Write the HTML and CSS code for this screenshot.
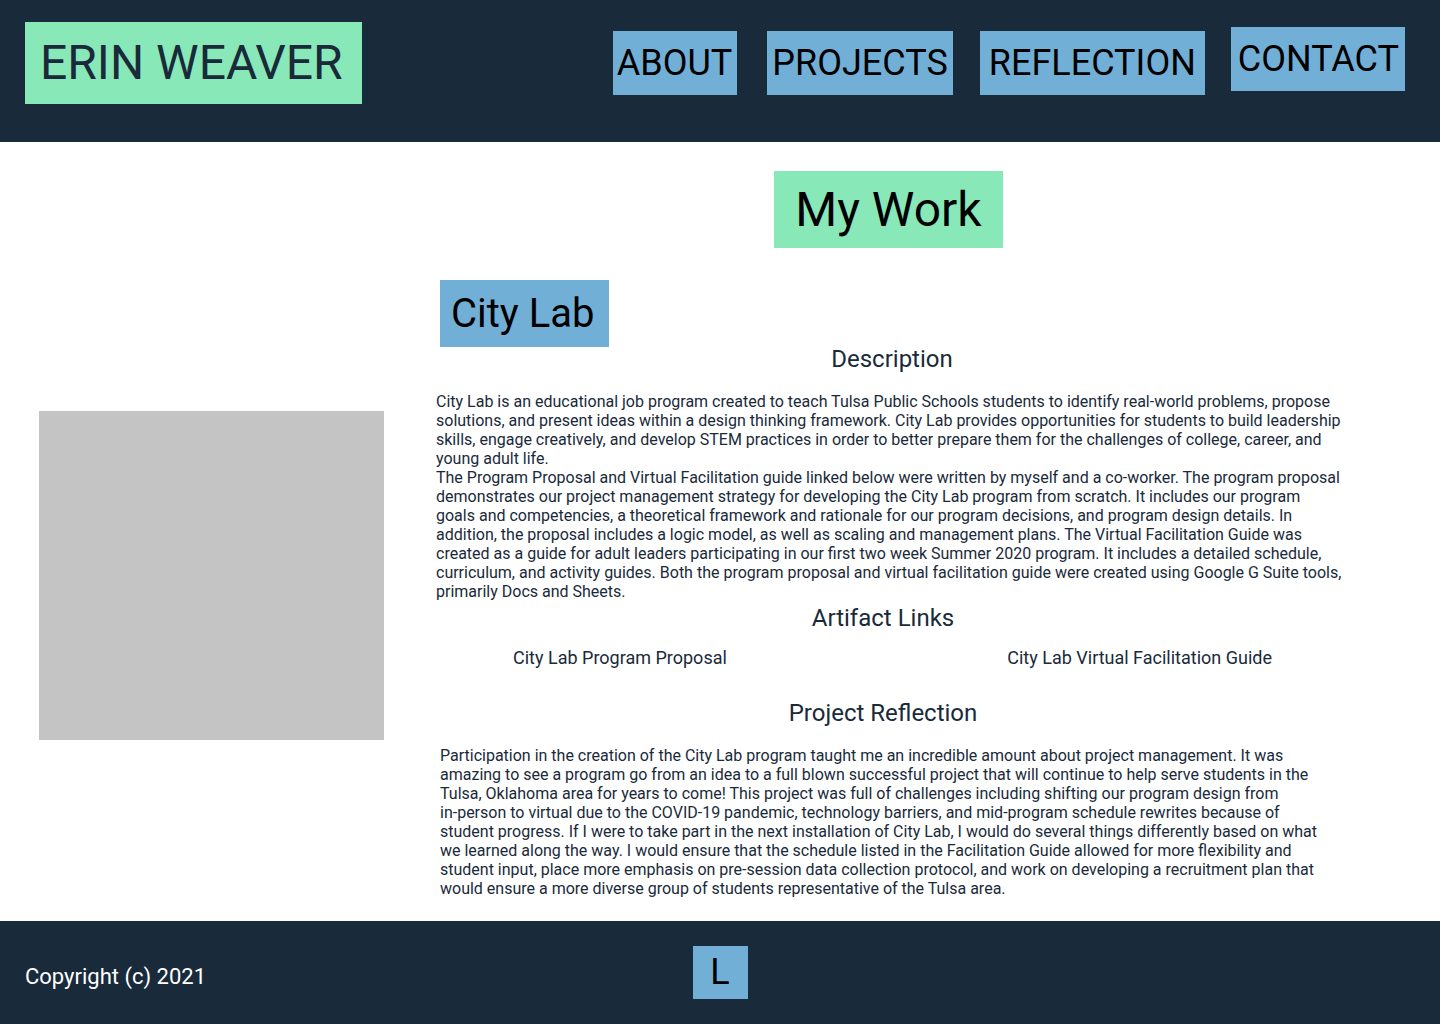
FILE: index.html
```html
<!DOCTYPE html>
<html lang="en">
<head>
<meta charset="utf-8">
<title>Erin Weaver - My Work</title>
<link rel="stylesheet" href="styles.css">
</head>
<body>
<header class="site-header">
  <div class="logo">ERIN WEAVER</div>
  <nav class="nav">
    <a class="nav-item nav-about" href="#">ABOUT</a>
    <a class="nav-item nav-projects" href="#">PROJECTS</a>
    <a class="nav-item nav-reflection" href="#">REFLECTION</a>
    <a class="nav-item nav-contact" href="#">CONTACT</a>
  </nav>
</header>
<main class="main">
  <aside class="aside">
    <div class="photo"></div>
  </aside>
  <section class="content">
    <h1 class="page-title">My Work</h1>
    <h2 class="project-title">City Lab</h2>
    <h3 class="section-title">Description</h3>
    <div class="text description">
      <p>City Lab is an educational job program created to teach Tulsa Public Schools students to identify real-world problems, propose solutions, and present ideas within a design thinking framework. City Lab provides opportunities for students to build leadership skills, engage creatively, and develop STEM practices in order to better prepare them for the challenges of college, career, and young adult life.</p>
      <p>The Program Proposal and Virtual Facilitation guide linked below were written by myself and a co-worker. The program proposal demonstrates our project management strategy for developing the City Lab program from scratch. It includes our program goals and competencies, a theoretical framework and rationale for our program decisions, and program design details. In addition, the proposal includes a logic model, as well as scaling and management plans. The Virtual Facilitation Guide was created as a guide for adult leaders participating in our first two week Summer 2020 program. It includes a detailed schedule, curriculum, and activity guides. Both the program proposal and virtual facilitation guide were created using Google G Suite tools, primarily Docs and Sheets.</p>
    </div>
    <h3 class="section-title links-title">Artifact Links</h3>
    <div class="links">
      <a class="link" href="#">City Lab Program Proposal</a>
      <a class="link" href="#">City Lab Virtual Facilitation Guide</a>
    </div>
    <h3 class="section-title reflection-title">Project Reflection</h3>
    <div class="text reflection">
      <p>Participation in the creation of the City Lab program taught me an incredible amount about project management. It was amazing to see a program go from an idea to a full blown successful project that will continue to help serve students in the Tulsa, Oklahoma area for years to come! This project was full of challenges including shifting our program design from <span class="nowrap">in-person</span> to virtual due to the COVID-19 pandemic, technology barriers, and mid-program schedule rewrites because of student progress. If I were to take part in the next installation of City Lab, I would do several things differently based on what we learned along the way. I would ensure that the schedule listed in the Facilitation Guide allowed for more flexibility and student input, place more emphasis on pre-session data collection protocol, and work on developing a recruitment plan that would ensure a more diverse group of students representative of the Tulsa area.</p>
    </div>
  </section>
</main>
<footer class="site-footer">
  <div class="copyright">Copyright (c) 2021</div>
  <a class="footer-icon" href="#">L</a>
  <div class="footer-spacer"></div>
</footer>
</body>
</html>
```

FILE: styles.css
```css
* { box-sizing: border-box; }

html, body {
  margin: 0;
  padding: 0;
}

body {
  width: 1440px;
  font-family: Roboto, "Liberation Sans", Arial, sans-serif;
  color: #192a3a;
  background: #ffffff;
}

a { text-decoration: none; color: inherit; }
p, h1, h2, h3 { margin: 0; font-weight: 400; }

.nowrap { white-space: nowrap; }

/* Header */
.site-header {
  height: 142px;
  background: #192a3a;
  display: flex;
  justify-content: space-between;
  align-items: flex-start;
  padding: 22px 35px 0 25px;
}

.logo {
  background: #88e8b8;
  color: #192a3a;
  font-size: 48px;
  line-height: 82px;
  height: 82px;
  padding: 0 19px 0 15px;
  white-space: nowrap;
}

.nav {
  display: flex;
  align-items: flex-start;
  padding-top: 9px;
}

.nav-item {
  background: #72afd6;
  color: #000;
  font-size: 36px;
  line-height: 64px;
  height: 64px;
  padding: 0 7px;
  white-space: nowrap;
}

.nav-about { padding: 0 5px 0 4px; }
.nav-projects { padding: 0 5px; margin-left: 30px; }
.nav-reflection { padding: 0 9px; margin-left: 27px; }
.nav-contact { padding: 0 6px 0 7px; margin-top: -4px; margin-left: 26px; }

/* Main */
.main {
  display: flex;
  align-items: flex-start;
  padding: 29px 0 23px 39px;
  min-height: 779px;
}

.aside {
  width: 345px;
  flex: none;
  padding-top: 240px;
}

.photo {
  width: 345px;
  height: 329px;
  background: #c4c4c4;
}

.content {
  width: 910px;
  margin-left: 52px;
  display: flex;
  flex-direction: column;
}

.page-title {
  align-self: center;
  background: #88e8b8;
  color: #000;
  font-size: 48px;
  line-height: 77px;
  height: 77px;
  padding: 0 21px;
  margin-left: -5px;
}

.project-title {
  align-self: flex-start;
  margin: 32px 0 0 4px;
  background: #72afd6;
  color: #000;
  font-size: 40px;
  line-height: 67px;
  height: 67px;
  padding: 0 15px 0 11px;
}

.section-title {
  text-align: center;
  font-size: 24px;
  line-height: 24px;
  color: #192a3a;
}

.content > .section-title:first-of-type { margin-left: 2px; }

.text {
  margin-top: 21px;
  font-size: 16px;
  line-height: 19px;
  color: #192a3a;
}

.description { width: 906px; }

.links-title { margin-top: 5px; margin-right: 16px; }

.links {
  display: flex;
  justify-content: space-between;
  padding: 0 74px 0 77px;
  margin-top: 17px;
  font-size: 18px;
  line-height: 22px;
}

.reflection-title { margin-top: 32px; margin-right: 16px; }

.reflection {
  margin-top: 21px;
  margin-left: 4px;
  width: 885px;
}

/* Footer */
.site-footer {
  height: 103px;
  background: #192a3a;
  display: grid;
  grid-template-columns: 1fr auto 1fr;
  align-items: center;
  padding: 0 25px;
}

.copyright {
  color: #ffffff;
  font-size: 22px;
  line-height: 26px;
  padding-top: 9px;
}

.footer-icon {
  background: #72afd6;
  color: #000;
  width: 55px;
  height: 53px;
  font-size: 36px;
  line-height: 53px;
  text-align: center;
}
```
